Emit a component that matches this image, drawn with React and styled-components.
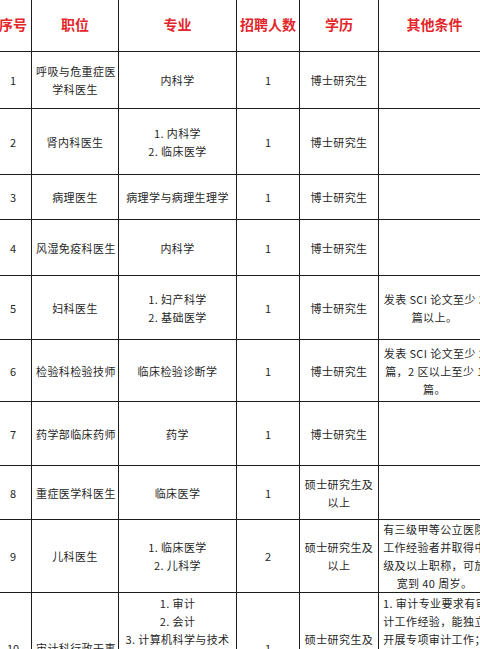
import React from 'react'
import styled, { createGlobalStyle } from 'styled-components'

const GlobalStyle = createGlobalStyle`
  html, body {
    margin: 0;
    padding: 0;
    background: #fff;
    overflow: hidden;
  }
  body {
    width: 480px;
    height: 649px;
    font-family: "Noto Sans CJK SC", "Noto Sans", sans-serif;
  }
`;

const Page = styled.div`
  width: 480px;
  height: 649px;
  overflow: hidden;
`;

const Table = styled.table`
  border-collapse: collapse;
  table-layout: fixed;
  width: 496px;
  margin: -5px 0 0 -6px;
`;

const Col = styled.col`
  width: ${p => p.w}px;
`;

const HeadCell = styled.th`
  height: 55px;
  padding: 0;
  border: 1px solid #1c1c1c;
  color: #e3262b;
  font-size: 14px;
  font-weight: 700;
  text-align: center;
  vertical-align: middle;
  white-space: nowrap;
`;

const Row = styled.tr`
  height: ${p => p.h}px;
`;

const Cell = styled.td`
  padding: ${p => (p.top ? '1px 4px 0' : '0 4px')};
  border: 1px solid #1c1c1c;
  color: #262626;
  font-size: 11px;
  line-height: 18px;
  text-align: center;
  vertical-align: ${p => (p.top ? 'top' : 'middle')};
  white-space: nowrap;
  overflow: hidden;
`;

const Line = styled.div`
  letter-spacing: ${p => (p.loose ? '0.4px' : '0')};
`;

const headers = ['序号', '职位', '专业', '招聘人数', '学历', '其他条件'];
const widths = [37, 87, 118, 63, 79, 112];

const rows = [
  { no: '1', pos: ['呼吸与危重症医', '学科医生'], major: ['内科学'], count: '1', edu: ['博士研究生'], other: [], h: 57 },
  { no: '2', pos: ['肾内科医生'], major: ['1. 内科学', '2. 临床医学'], count: '1', edu: ['博士研究生'], other: [], h: 66 },
  { no: '3', pos: ['病理医生'], major: ['病理学与病理生理学'], count: '1', edu: ['博士研究生'], other: [], h: 45 },
  { no: '4', pos: ['风湿免疫科医生'], major: ['内科学'], count: '1', edu: ['博士研究生'], other: [], h: 56 },
  { no: '5', pos: ['妇科医生'], major: ['1. 妇产科学', '2. 基础医学'], count: '1', edu: ['博士研究生'], other: ['发表 SCI 论文至少 3', '篇以上。'], h: 64 },
  { no: '6', pos: ['检验科检验技师'], major: ['临床检验诊断学'], count: '1', edu: ['博士研究生'], other: ['发表 SCI 论文至少 2', '篇，2 区以上至少 1', '篇。'], h: 62 },
  { no: '7', pos: ['药学部临床药师'], major: ['药学'], count: '1', edu: ['博士研究生'], other: [], h: 64 },
  { no: '8', pos: ['重症医学科医生'], major: ['临床医学'], count: '1', edu: ['硕士研究生及', '以上'], other: [], h: 54 },
  {
    no: '9', pos: ['儿科医生'], major: ['1. 临床医学', '2. 儿科学'], count: '2', edu: ['硕士研究生及', '以上'],
    other: ['有三级甲等公立医院', '工作经验者并取得中', '级及以上职称，可放', '宽到 40 周岁。'], h: 72
  },
  {
    no: '10', pos: ['审计科行政干事'], major: ['1. 审计', '2. 会计', '3. 计算机科学与技术', '4. 法学'], count: '1',
    edu: ['硕士研究生及', '以上'], other: ['1. 审计专业要求有审', '计工作经验，能独立', '开展专项审计工作；', '2. 具有相关专业中级'],
    h: 110, top: true
  },
];

const Lines = ({ items, loose }) => items.map((t, i) => <Line key={i} loose={loose}>{t}</Line>);

export default function App() {
  return (
    <Page>
      <GlobalStyle />
      <Table>
        <colgroup>
          {widths.map((w, i) => <Col key={i} w={w} />)}
        </colgroup>
        <thead>
          <tr>
            {headers.map(h => <HeadCell key={h}>{h}</HeadCell>)}
          </tr>
        </thead>
        <tbody>
          {rows.map(r => (
            <Row key={r.no} h={r.h}>
              <Cell>{r.no}</Cell>
              <Cell><Lines items={r.pos} loose /></Cell>
              <Cell top={r.top}><Lines items={r.major} loose /></Cell>
              <Cell>{r.count}</Cell>
              <Cell><Lines items={r.edu} loose /></Cell>
              <Cell top={r.top}><Lines items={r.other} loose /></Cell>
            </Row>
          ))}
        </tbody>
      </Table>
    </Page>
  );
}
